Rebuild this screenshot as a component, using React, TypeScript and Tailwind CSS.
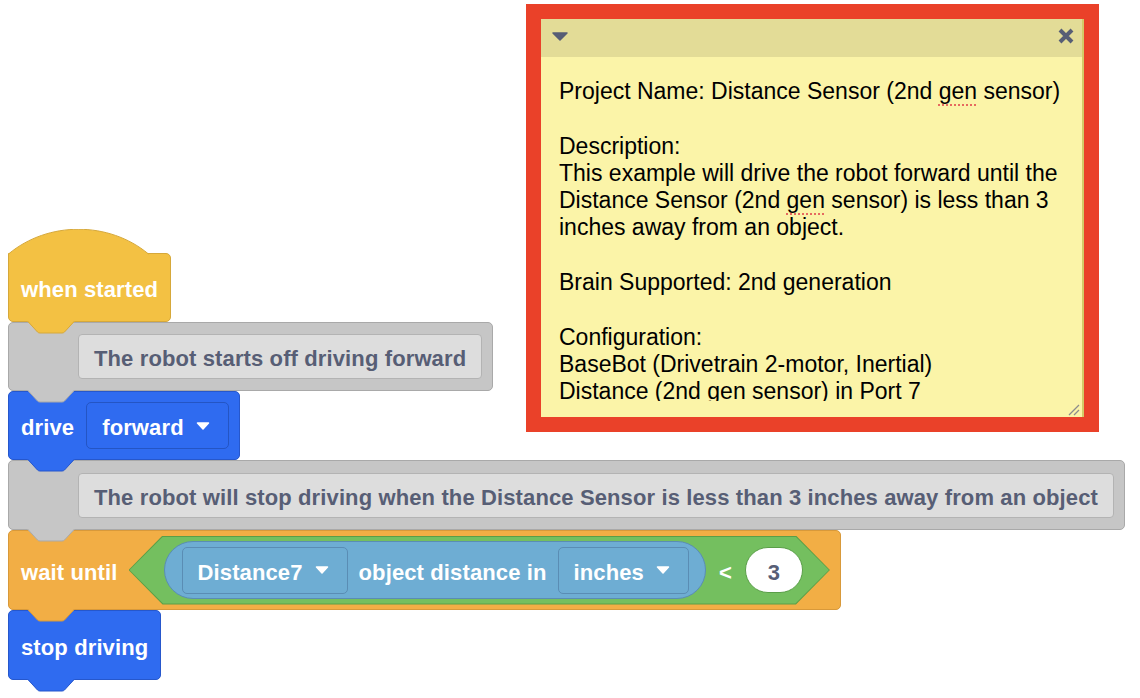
import type { ReactNode } from 'react'

const FONT = { fontFamily: '"Liberation Sans", Arial, Helvetica, sans-serif' }

// little connector tab hanging under a stack block
function Tab({ fill, stroke }: { fill: string; stroke: string }) {
  return (
    <svg className="absolute left-[18px] top-full z-10" width="48" height="13" viewBox="0 0 48 13">
      <path d="M0 0 L10.5 11 Q11.5 12 13 12 L35 12 Q36.5 12 37.5 11 L48 0 Z" fill={fill} />
      <path d="M0.5 0 L10.5 11 Q11.5 12 13 12 L35 12 Q36.5 12 37.5 11 L47.5 0" fill="none" stroke={stroke} strokeWidth="1" />
    </svg>
  )
}

function Caret() {
  return (
    <svg width="14" height="8" viewBox="0 0 14 8">
      <path d="M1.5 1 L12.5 1 L7 7 Z" fill="#fff" stroke="#fff" strokeWidth="1.5" strokeLinejoin="round" />
    </svg>
  )
}

function Label({ children, className = '' }: { children: ReactNode; className?: string }) {
  return <span className={`relative top-[2px] ${className}`}>{children}</span>
}

function Dropdown({ label, className }: { label: string; className: string }) {
  return (
    <div className={`flex h-[47px] items-center gap-[12px] rounded-[5px] border pl-[15px] pr-[18px] ${className}`}>
      <Label>{label}</Label>
      <Caret />
    </div>
  )
}

function Comment({ children, height }: { children: ReactNode; height: string }) {
  return (
    <div className={`relative flex items-center rounded-[5px] border border-[#a9a9a9] bg-[#c6c6c6] pl-[69px] pr-[10px] ${height}`}>
      <div className="flex h-[45px] items-center rounded-[4px] border border-[#b3b3b3] bg-[#dddddd] px-[15px] text-[#575e75]">
        <Label>{children}</Label>
      </div>
      <Tab fill="#c6c6c6" stroke="#a9a9a9" />
    </div>
  )
}

function Spell({ children }: { children: ReactNode }) {
  return (
    <span className="underline decoration-[#e66a5f] decoration-dotted decoration-2 underline-offset-[5px]">
      {children}
    </span>
  )
}

const noteLines: ReactNode[] = [
  <>Project Name: Distance Sensor (2nd <Spell>gen</Spell> sensor)</>,
  '',
  'Description:',
  'This example will drive the robot forward until the',
  <>Distance Sensor (2nd <Spell>gen</Spell> sensor) is less than 3</>,
  'inches away from an object.',
  '',
  'Brain Supported: 2nd generation',
  '',
  'Configuration:',
  'BaseBot (Drivetrain 2-motor, Inertial)',
  'Distance (2nd gen sensor) in Port 7',
]

function Note() {
  return (
    <div className="absolute left-[526px] top-[4px] flex h-[428px] w-[573px] flex-col border-[15px] border-[#ea4129]">
      <div className="flex h-[38px] shrink-0 items-start justify-between border-r-2 border-[#d4ca68] bg-[#e3dc97] pl-[11px] pr-[8px]">
        <svg className="mt-[13px]" width="16" height="9" viewBox="0 0 16 9">
          <path d="M1 1 L15 1 L8 8 Z" fill="#575e75" stroke="#575e75" strokeWidth="1.5" strokeLinejoin="round" />
        </svg>
        <svg className="mt-[9px]" width="16" height="16" viewBox="0 0 16 16">
          <path d="M2 2 L14 14 M14 2 L2 14" stroke="#575e75" strokeWidth="4" />
        </svg>
      </div>
      <div className="relative flex-1 border-r-2 border-[#d4ca68] bg-[#fbf4a8] pl-[18px]">
        <div className="mt-[19px] h-[325px] overflow-hidden pt-[2px] text-[23px] leading-[27.3px] text-black">
          {noteLines.map((line, i) => (
            <div key={i} className="h-[27.3px] whitespace-nowrap">
              {line}
            </div>
          ))}
        </div>
        <svg className="absolute bottom-[1px] right-[2px]" width="12" height="12" viewBox="0 0 12 12">
          <path d="M11 1 L1 11 M11 6 L6 11" stroke="#8c8c8c" strokeWidth="1.3" />
        </svg>
      </div>
    </div>
  )
}

export default function App() {
  return (
    <div className="relative h-[698px] w-[1140px] overflow-hidden bg-white" style={FONT}>
      <div className="flex flex-col items-start pl-[8px] pt-[253px] text-[22px] font-bold tracking-[0.12px] text-white">
        {/* hat block */}
        <div className="relative flex h-[69px] items-center rounded-[5px] rounded-tl-none border border-[#d6a83a] bg-[#f3c143] px-[12px]">
          <svg className="absolute left-[-1px] top-[-25px]" width="142" height="26" viewBox="0 0 142 26">
            <path d="M0.5 25 C40 -8 101 -8 140.5 25 L140.5 26 L0.5 26 Z" fill="#f3c143" />
            <path d="M0.5 26 L0.5 25 C40 -8 101 -8 140.5 25" fill="none" stroke="#d6a83a" strokeWidth="1" />
          </svg>
          <Label>when started</Label>
          <Tab fill="#f3c143" stroke="#d6a83a" />
        </div>

        <Comment height="h-[69px]">The robot starts off driving forward</Comment>

        {/* drive */}
        <div className="relative flex h-[69px] items-center gap-[12px] rounded-[5px] border border-[#2657cc] bg-[#2f6bf0] pl-[12px] pr-[10px]">
          <Label>drive</Label>
          <Dropdown label="forward" className="border-[#2455c4] bg-[#2f6bf0]" />
          <Tab fill="#2f6bf0" stroke="#2657cc" />
        </div>

        <Comment height="h-[70px]">
          The robot will stop driving when the Distance Sensor is less than 3 inches away from an object
        </Comment>

        {/* wait until */}
        <div className="relative flex h-[80px] items-center gap-[11px] rounded-[5px] border border-[#d8993a] bg-[#f2ae45] pl-[12px] pr-[10px]">
          <Label>wait until</Label>
          <div className="bg-[#5a9e48] p-px [clip-path:polygon(34px_0,calc(100%-34px)_0,100%_50%,calc(100%-34px)_100%,34px_100%,0_50%)]">
            <div className="flex h-[67px] items-center bg-[#74bf5f] pl-[34px] pr-[26px] [clip-path:polygon(33.5px_0,calc(100%-33.5px)_0,100%_50%,calc(100%-33.5px)_100%,33.5px_100%,0_50%)]">
              <div className="flex h-[58px] items-center rounded-full border border-[#5a8db4] bg-[#6eadd3] pl-[17px] pr-[16px]">
                <Dropdown label="Distance7" className="border-[#5a8db4] bg-[#6eadd3]" />
                <Label className="ml-[11px] mr-[11px]">object distance in</Label>
                <Dropdown label="inches" className="border-[#5a8db4] bg-[#6eadd3]" />
              </div>
              <Label className="mx-[13px]">&lt;</Label>
              <div className="flex h-[46px] w-[58px] items-center justify-center rounded-full border border-[#5a9e48] bg-white text-[#575e75]">
                <Label>3</Label>
              </div>
            </div>
          </div>
          <Tab fill="#f2ae45" stroke="#d8993a" />
        </div>

        {/* stop driving */}
        <div className="relative flex h-[70px] items-center rounded-[5px] border border-[#2657cc] bg-[#2f6bf0] px-[12px]">
          <Label>stop driving</Label>
          <Tab fill="#2f6bf0" stroke="#2657cc" />
        </div>
      </div>

      <Note />
    </div>
  )
}
